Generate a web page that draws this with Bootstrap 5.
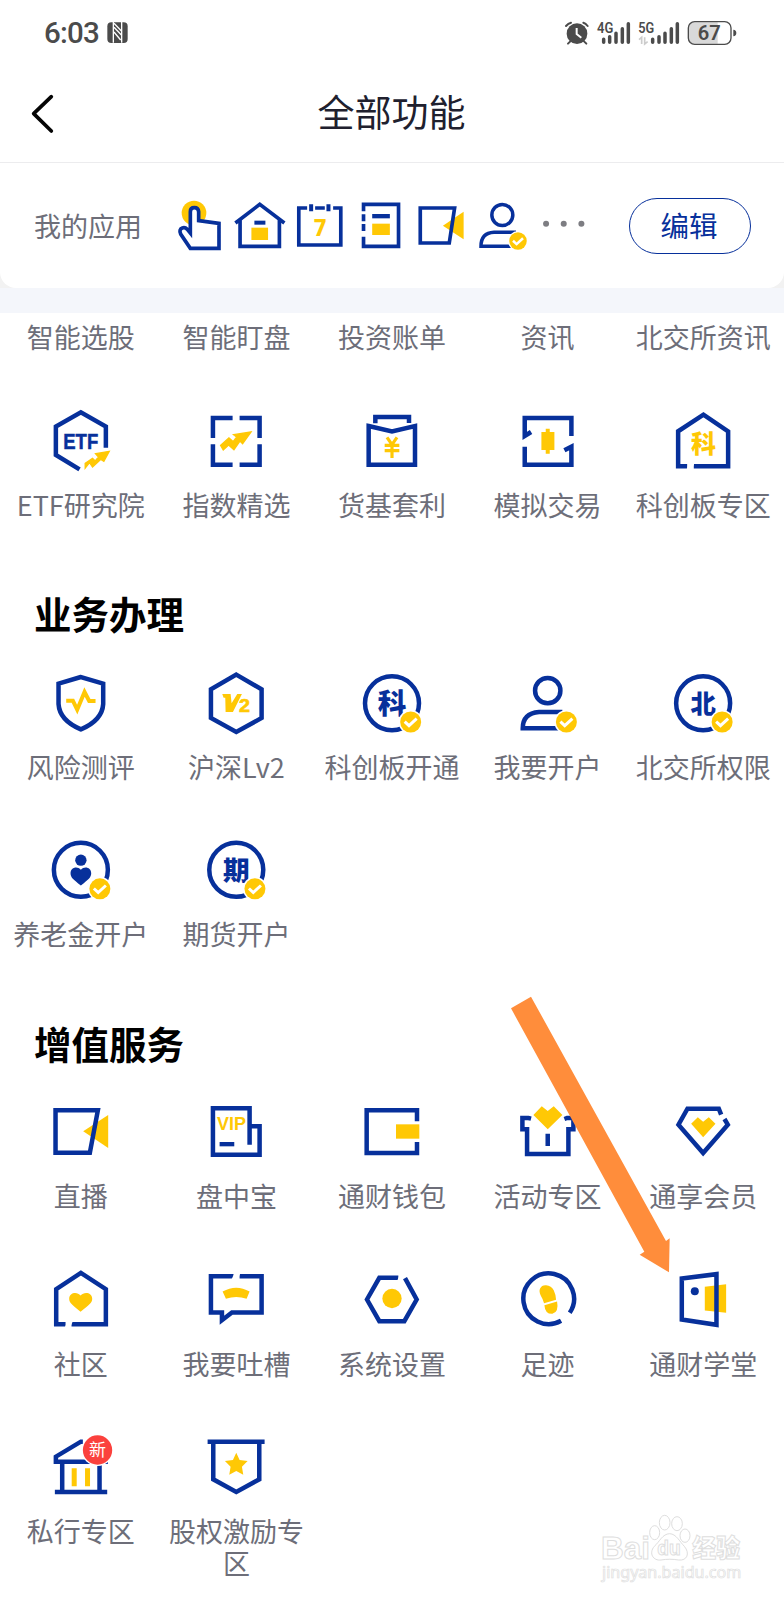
<!DOCTYPE html>
<html lang="zh-CN">
<head>
<meta charset="utf-8">
<meta name="viewport" content="width=device-width, initial-scale=1">
<title>全部功能</title>
<link href="https://cdn.jsdelivr.net/npm/bootstrap@5.3.0/dist/css/bootstrap.min.css" rel="stylesheet">
<style>
:root{--blue:#07309b;--gold:#ffc805;--label:#6d6e79}
body{font-family:Roboto,"Noto Sans CJK SC",sans-serif;background:#fff;height:1600px;overflow:hidden}
svg{display:block;overflow:visible}
svg text{font-family:"Noto Sans CJK SC",sans-serif}
.statusbar{height:68px;padding:0 46px 0 44px;color:#4b4b4b}
.clock{font-size:29.5px;font-weight:500;line-height:67px;letter-spacing:-.8px}
.titlebar{height:95px;border-bottom:1px solid #ececee;padding-bottom:9px}
.titlebar h1{font:400 37px/56px "Noto Sans CJK SC",sans-serif;color:#20202e;margin-right:1px}
.back-btn{left:30px;top:21px}
.band{background:linear-gradient(#f2f2f2 125px,#f4f6fb 125px);height:150px;padding-bottom:25px}
.my-apps{background:#fff;height:125px;border-radius:0 0 16px 16px;padding:0 33px 0 34px}
.my-apps .caption-text{font:400 27px/40px "Noto Sans CJK SC",sans-serif;color:var(--label);width:135px}
.app-strip svg{width:60.6px;height:60px}
.edit-btn{width:122px;height:56px;border:1px solid var(--blue);border-radius:28px;color:var(--blue);font:400 28.5px/50px "Noto Sans CJK SC",sans-serif;padding:0 2px 2px 0}
.tiles{padding:0 3px}
.tiles>.col{display:flex;flex-direction:column;align-items:center;margin-bottom:51.5px}
.tiles svg{width:72px;height:72px;margin-bottom:12px}
.tiles span{font:400 27px/32px "Noto Sans CJK SC",sans-serif;color:var(--label);text-align:center;width:138px;white-space:nowrap;display:flex;justify-content:center}
.tiles span.wrap-label{white-space:normal;display:block}
.sec-title{font:700 37.5px/82px "Noto Sans CJK SC",sans-serif;color:#000;padding-left:34px;height:94.5px;margin:0}
.b{fill:none;stroke:var(--blue);stroke-width:13.5;stroke-miterlimit:10}
.bf{fill:var(--blue)}
.y{fill:var(--gold)}
.pointer{left:392px;top:980px}
.watermark{left:560px;top:1490px}
</style>
</head>
<body class="position-relative">

<svg width="0" height="0" class="position-absolute">
  <defs>
    <symbol id="tick" viewBox="-36 -36 72 72" overflow="visible">
      <circle r="36" fill="#fff"/><circle r="31.5" class="y"/>
      <path d="M-18-1L-5 11 18-10" fill="none" stroke="#fff" stroke-width="9"/>
    </symbol>
  </defs>
</svg>

<div class="statusbar d-flex justify-content-between align-items-start">
  <div class="d-flex">
    <span class="clock">6:03</span>
    <svg class="ms-2" width="22" height="68" viewBox="321 0 66 204">
      <rect x="322" y="67" width="61" height="62" rx="12" fill="#4b4b4b"/>
      <path d="M340 66v62M365 66v62" stroke="#fff" stroke-width="4"/>
      <path d="M342 70L365 94M342 82L365 106M342 96L362 120" stroke="#fff" stroke-width="4"/>
    </svg>
  </div>
  <svg width="173" height="68" viewBox="520 0 519 204" fill="#4b4b4b">
    <circle cx="556" cy="101" r="31"/>
    <path d="M523 78Q530 70 538 68M588 78Q582 70 575 68M536 124L529 131M577 124L584 131" fill="none" stroke="#4b4b4b" stroke-width="6" stroke-linecap="round"/>
    <path d="M555 84V102L569 113" fill="none" stroke="#fff" stroke-width="6"/>
    <g style="font-weight:600"><text x="616" y="99" font-size="44" textLength="49" lengthAdjust="spacingAndGlyphs" style="font-family:Roboto">4G</text>
    <text x="740" y="99" font-size="44" textLength="48" lengthAdjust="spacingAndGlyphs" style="font-family:Roboto">5G</text></g>
    <g stroke="#4b4b4b" stroke-width="10.5" stroke-linecap="round">
      <path d="M636 118v9M654 110v17M673 100v27M692 86v41M710 71v56"/>
      <path d="M783 118v9M802 110v17M820 100v27M839 86v41M857 71v56"/>
    </g>
    <path d="M742 119L750 112V132M759 112V132L768 125" fill="none" stroke="#ccc" stroke-width="5"/>
    <path d="M905 67H978V131H905Q891 131 891 117V81Q891 67 905 67" fill="#d9d9d9"/>
    <rect x="890" y="65" width="128" height="68" rx="19" fill="none" stroke="#4b4b4b" stroke-width="4"/>
    <path d="M1025 89Q1034 90 1034 99T1025 109Z"/>
    <text x="918" y="121" font-size="61" textLength="69" lengthAdjust="spacingAndGlyphs" style="font-weight:600;font-family:Roboto">67</text>
  </svg>
</div>

<header class="titlebar position-relative d-flex justify-content-center align-items-center">
  <a href="#" class="back-btn position-absolute" aria-label="返回">
    <svg width="26" height="48" viewBox="90 267 78 144"><path d="M154 290L101 341 154 393" fill="none" stroke="#050505" stroke-width="11" stroke-linecap="round" stroke-linejoin="round"/></svg>
  </a>
  <h1 class="my-0">全部功能</h1>
</header>

<div class="band">
  <div class="my-apps d-flex align-items-center">
    <div class="caption-text">我的应用</div>
    <div class="app-strip d-flex flex-grow-1 align-items-center">
      <svg viewBox="507 108 181.8 180"><circle cx="582" cy="159" r="37" class="y"/><path d="M571 215V155Q571 143 583 143T596 155V182L657 190V265H571L542 222Q536 208 547 204Q555 201 562 208L571 219Z" fill="#fff" stroke="#07309b" stroke-width="11"/></svg>
      <svg viewBox="688.8 108 181.8 180"><path d="M719 180V259H837V180M705 189L778 133 852 189" class="b" style="stroke-width:11"/><rect x="762" y="182" width="33" height="12" class="bf"/><rect x="753" y="203" width="50" height="37" class="y"/></svg>
      <svg viewBox="870.6 108 181.8 180"><path d="M922 144H897V255H1023V144H1000M946 144H975" class="b" style="stroke-width:11"/><path d="M934 133v21M986 133v21" class="b" style="stroke-width:12"/><text x="942" y="227" font-size="71" class="y" style="font-family:'Noto Sans';font-weight:800" textLength="38" lengthAdjust="spacingAndGlyphs">7</text></svg>
      <svg viewBox="1052.4 108 181.8 180"><path d="M1090 154V133H1195V259H1090V230M1090 163V184M1090 192V213" class="b" style="stroke-width:11"/><rect x="1116" y="162" width="53" height="13" class="bf"/><rect x="1116" y="191" width="53" height="34" class="y"/></svg>
      <svg viewBox="58.2 108 181.8 180"><path d="M154 197L216 155V238Z" class="y"/><path d="M86 144H189L173 249H86Z" class="b" style="stroke-width:11"/></svg>
      <svg viewBox="240 108 181.8 180"><circle cx="331" cy="165" r="31.5" class="b" style="stroke-width:10.5"/><path d="M372 217H306Q267 219 267 259H372" class="b" style="stroke-width:10.5"/><use href="#tick" x="348" y="213" width="60" height="60"/></svg>
      <svg viewBox="421.8 108 181.8 180" fill="#7d7d82"><circle cx="461" cy="191" r="9"/><circle cx="514" cy="191" r="9"/><circle cx="567" cy="191" r="9"/></svg>
    </div>
    <button type="button" class="btn edit-btn">编辑</button>
  </div>
</div>

<main class="pt-2">
  <div class="row row-cols-5 g-0 tiles">
    <div class="col"><span>智能选股</span></div>
    <div class="col"><span>智能盯盘</span></div>
    <div class="col"><span>投资账单</span></div>
    <div class="col"><span>资讯</span></div>
    <div class="col"><span>北交所资讯</span></div>

    <div class="col">
      <svg viewBox="134.4 45 216 216"><path d="M317 173V110L242 67 167 110V195L238 238" class="b"/><text x="189" y="177" font-size="68" class="bf" stroke="#07309b" stroke-width="1.5" style="font-family:'Liberation Sans';font-weight:700" textLength="105" lengthAdjust="spacingAndGlyphs">ETF</text><path d="M327 184L311 214 302 208 277 231 268 218 255 234V220L277 205 285 213 295 201 286 191Z" class="y" stroke="#ffc805" stroke-width="4"/></svg>
      <span>ETF研究院</span></div>
    <div class="col">
      <svg viewBox="601.2 45 216 216"><path d="M699 84H640V144M720 84H780V144M640 163V224H699M780 163V224H720" class="b"/><path d="M754 126L729 161 721 153 703 179 687 165 671 180 663 166 688 144 701 155 711 141 702 134Z" class="y" stroke="#ffc805" stroke-width="4"/></svg>
      <span>指数精选</span></div>
    <div class="col">
      <svg viewBox="1068 45 216 216"><path d="M1126 100V81H1227V99" class="b"/><path d="M1106 108L1176 124 1245 108V224H1106Z" class="b"/><path d="M1161 142L1174 161M1191 142L1178 161M1154 166H1198M1154 182H1198M1176 160V204" fill="none" stroke="#ffc805" stroke-width="9.5"/></svg>
      <span>货基套利</span></div>
    <div class="col">
      <svg viewBox="358.8 45 216 216"><path d="M537 138V84H397V138L416 126M397 170V224H537V170L516 181" class="b"/><path d="M447 126H460V116H472V126H486V180H472V191H460V180H447Z" class="y"/></svg>
      <span>模拟交易</span></div>
    <div class="col">
      <svg viewBox="825.6 45 216 216"><path d="M886 229H859V124L935 74 1009 124V229H906" class="b"/><path d="M892 219L884 239H900L908 219Z" fill="#fff"/><text x="935" y="189" text-anchor="middle" font-size="75" class="y" style="font-weight:800">科</text></svg>
      <span>科创板专区</span></div>
  </div>

  <h2 class="sec-title">业务办理</h2>
  <div class="row row-cols-5 g-0 tiles">
    <div class="col">
      <svg viewBox="134.4 51 216 216"><path d="M242 81L175 101V162Q178 211 242 238Q306 211 309 162V101Z" class="b"/><path d="M198 152H218L231 179 253 126 267 153H286" fill="none" stroke="#ffc805" stroke-width="12"/></svg>
      <span>风险测评</span></div>
    <div class="col">
      <svg viewBox="601.2 51 216 216"><path d="M710 74L786 118V204L710 246 634 204V118Z" class="b"/><path d="M668 132H693L696 160 713 132H727L700 186H678L677 143H672Z" class="y"/><text x="718" y="186" font-size="57" class="y" stroke="#ffc805" stroke-width="2" style="font-family:'Liberation Sans';font-weight:700" textLength="33" lengthAdjust="spacingAndGlyphs">2</text></svg>
      <span>沪深Lv2</span></div>
    <div class="col">
      <svg viewBox="1068 51 216 216"><circle cx="1176" cy="160" r="81" class="b"/><text x="1176" y="191" text-anchor="middle" font-size="86" class="bf" style="font-weight:800">科</text><use href="#tick" x="1196" y="180" width="72" height="72"/></svg>
      <span>科创板开通</span></div>
    <div class="col">
      <svg viewBox="358.8 51 216 216"><circle cx="466" cy="122" r="38" class="b"/><path d="M510 186H440Q391 190 391 235H510" class="b"/><use href="#tick" x="486" y="180" width="72" height="72"/></svg>
      <span>我要开户</span></div>
    <div class="col">
      <svg viewBox="825.6 51 216 216"><circle cx="934" cy="160" r="81" class="b"/><text x="934" y="189" text-anchor="middle" font-size="76" class="bf" style="font-weight:800">北</text><use href="#tick" x="955" y="180" width="72" height="72"/></svg>
      <span>北交所权限</span></div>

    <div class="col">
      <svg viewBox="134.4 553.5 216 216"><circle cx="242" cy="661" r="81" class="b"/><circle cx="242" cy="632" r="17" class="bf"/><path d="M242 661C231 648 211 654 211 671C211 684 219 689 242 708C265 689 273 684 273 671C273 654 253 648 242 661Z" class="bf"/><use href="#tick" x="263" y="682" width="72" height="72"/></svg>
      <span>养老金开户</span></div>
    <div class="col">
      <svg viewBox="601.2 553.5 216 216"><circle cx="710" cy="661" r="81" class="b"/><text x="710" y="692" text-anchor="middle" font-size="80" class="bf" style="font-weight:800">期</text><use href="#tick" x="730" y="682" width="72" height="72"/></svg>
      <span>期货开户</span></div>
  </div>

  <h2 class="sec-title">增值服务</h2>
  <div class="row row-cols-5 g-0 tiles">
    <div class="col">
      <svg viewBox="134.4 291 216 216"><path d="M249 397L324 348V447Z" class="y"/><path d="M166 334H293L269 461H166Z" class="b"/></svg>
      <span>直播</span></div>
    <div class="col">
      <svg viewBox="601.2 291 216 216"><path d="M750 437V328H640V467H780V382H756" class="b"/><rect x="660" y="429" width="44" height="13" class="bf"/><text x="652" y="394" font-size="53" class="y" style="font-family:'Liberation Sans';font-weight:700" textLength="87" lengthAdjust="spacingAndGlyphs">VIP</text></svg>
      <span>盘中宝</span></div>
    <div class="col">
      <svg viewBox="1068 351 216 216"><path d="M1251 427V394H1100V522H1251V489" class="b"/><rect x="1188" y="436" width="70" height="43" class="y"/></svg>
      <span>通财钱包</span></div>
    <div class="col">
      <svg viewBox="358.8 351 216 216"><path d="M416 419L408 417H390V451H404V525H528V451H543V417H524L516 420M466 464V501" class="b"/><path d="M466 451L423 408 448 382 466 396 484 382 510 408Z" class="y"/></svg>
      <span>活动专区</span></div>
    <div class="col">
      <svg viewBox="825.6 351 216 216"><path d="M988 407L981 389H887L860 437 934 522 1008 437 998 420" class="b"/><path d="M934 475L898 434 918 415 934 428 951 415 971 434Z" class="y"/></svg>
      <span>通享会员</span></div>

    <div class="col">
      <svg viewBox="134.4 793.5 216 216"><path d="M196 974H168V869L242 820 317 869V974H214" class="b"/><path d="M202 965L194 983H210L218 965Z" fill="#fff"/><path d="M241 888C231 875 207 879 207 898C207 910 215 915 241 937C268 915 276 910 276 898C276 879 252 875 241 888Z" class="y"/></svg>
      <span>社区</span></div>
    <div class="col">
      <svg viewBox="601.2 793.5 216 216"><path d="M702 830H634V939H667V962L697 939H786V830H720" class="b"/><path d="M704 822L696 839H714L722 822Z" fill="#fff"/><path d="M669 876Q710 853 750 876L741 898Q710 887 679 898Z" class="y"/></svg>
      <span>我要吐槽</span></div>
    <div class="col">
      <svg viewBox="1068 853.5 216 216"><path d="M1195 895H1138L1101 960 1138 1025H1213L1250 960 1215 896" class="b"/><path d="M1199 886L1192 903H1204L1211 886Z" fill="#fff"/><circle cx="1176" cy="957" r="29" class="y"/></svg>
      <span>系统设置</span></div>
    <div class="col">
      <svg viewBox="358.8 853.5 216 216"><path d="M532 1000A76 76 0 1 0 506 1024" class="b"/><path d="M455 971Q452 960 445 948Q439 935 443 927Q448 916 461 917Q477 918 484 932Q490 944 491 961ZM456 977L494 966Q500 998 480 1003Q458 1004 456 977Z" class="y"/></svg>
      <span>足迹</span></div>
    <div class="col">
      <svg viewBox="825.6 853.5 216 216"><path d="M939 922L1003 914V1000L939 993Z" class="y"/><path d="M870 897L974 884V1036L870 1020Z" class="b"/><circle cx="909" cy="935" r="12" class="bf"/></svg>
      <span>通财学堂</span></div>

    <div class="col">
      <svg viewBox="134.4 96 216 216"><path d="M248 128L242 128 167 173V188H323M186 194V279M298 194V279M164 279H321" class="b"/><path d="M222 208V262M262 208V262" fill="none" stroke="#ffc805" stroke-width="15"/><circle cx="292" cy="153" r="48" fill="#fff"/><circle cx="292" cy="153" r="44" fill="#fb413d"/><text x="292" y="172" text-anchor="middle" font-size="51" fill="#fff">新</text></svg>
      <span>私行专区</span></div>
    <div class="col">
      <svg viewBox="601.2 96 216 216"><path d="M624 128H795M641 130V241L710 279 779 241V130" class="b"/><path d="M710 161L720 183 744 186 727 203 731 227 710 216 689 227 693 203 676 186 700 183Z" class="y"/></svg>
      <span class="wrap-label">股权激励专区</span></div>
  </div>
</main>

<svg class="pointer position-absolute" width="392" height="410" viewBox="0 0 1176 1230"><path d="M357 85L417 50 822 783 833 775 831 877 743 824 757 815Z" fill="#ff8d3b"/></svg>

<svg class="watermark position-absolute" width="224" height="110" viewBox="0 0 672 330" fill="#fff" stroke="#dedede" stroke-width="3">
  <text x="123" y="206" font-size="96" textLength="147" lengthAdjust="spacingAndGlyphs" style="font-family:'Liberation Sans';font-weight:700">Bai</text>
  <ellipse cx="284" cy="128" rx="15" ry="21"/><ellipse cx="314" cy="98" rx="16" ry="22"/><ellipse cx="351" cy="101" rx="16" ry="21"/><ellipse cx="375" cy="137" rx="15" ry="20"/>
  <path d="M329 131C307 132 299 155 283 169C265 190 280 213 303 210C320 207 338 207 356 210C381 213 391 190 373 169C358 154 349 132 329 131Z"/>
  <text x="292" y="196" font-size="60" textLength="70" lengthAdjust="spacingAndGlyphs" style="font-family:'Liberation Sans';font-weight:700">du</text>
  <text x="397" y="201" font-size="74" textLength="143" lengthAdjust="spacingAndGlyphs" style="font-weight:800">经验</text>
  <text x="126" y="263" font-size="46" textLength="418" lengthAdjust="spacingAndGlyphs" stroke-width="2" style="font-family:'Noto Sans'">jingyan.baidu.com</text>
</svg>

<script src="https://cdn.jsdelivr.net/npm/bootstrap@5.3.0/dist/js/bootstrap.bundle.min.js"></script>
</body>
</html>
